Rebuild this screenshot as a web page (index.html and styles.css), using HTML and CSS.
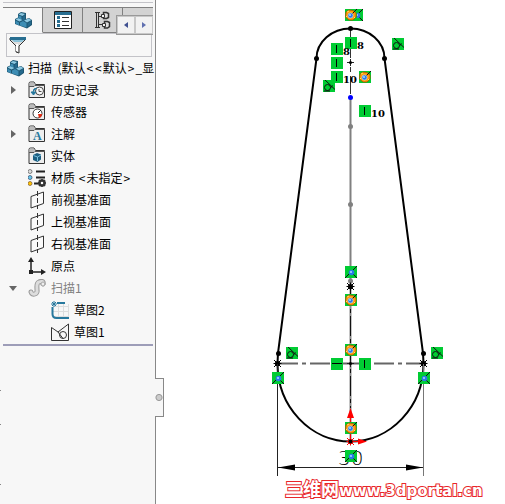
FILE: index.html
```
<!DOCTYPE html>
<html lang="zh-CN">

<head>
  <meta charset="UTF-8" />
  <title>扫描</title>
  <link rel="stylesheet" href="styles.css">
</head>

<body>
  <!-- shared symbols -->
  <svg class="defs" width="0" height="0" aria-hidden="true">
    <defs>
      <symbol id="part" viewBox="0 0 18 18">
        <path d="M1 8l3-1.500V3l3-2 5 1v6l3-1 3 2v5l-5 3.500L1 13z" fill="#1d5672" />
        <path d="M4.500 3.500L7 2l4 1-2.500 2zM1.500 8.500l3-1.500 4 2-3 1.500zM10 9.500l4.500-2 3 1.500-4.500 2.500z" fill="#8cc8e2" />
        <path d="M4.500 4.500l3 1v3l-3-1zM1.500 9.500l3.500 2v3l-3.500-2zM6 11.500l3-1.500 3.500 2v4.500L6 14.500z" fill="#3d8db4" />
        <path d="M8.500 6L11 4.200v4.500L8.500 10zM13.500 12.500l3.500-2.500v3.500L13.500 16z" fill="#25698d" />
      </symbol>
      <symbol id="folder" viewBox="0 0 18 18">
        <path d="M1 16.500V2.500Q1 1 2.500 1H6l1.500 2.500H16.500V16.500z" fill="#eee" stroke="#333" />
        <path d="M1.500 5V2Q2 1.500 3 1.500H6L7 4h9v1z" fill="#bbb" />
        <path d="M1 5.500h5l1-1h10" fill="none" stroke="#555" />
      </symbol>
      <symbol id="plane" viewBox="0 0 18 18">
        <path d="M3 5.500L15.500 1v11.500L3 17z" fill="#fafafa" stroke="#333" />
        <path d="M9.500 0v18" stroke="#333" stroke-dasharray="5 2" />
      </symbol>
      <symbol id="vertical" viewBox="0 0 12 12">
        <path d="M0 0h12v12H0z" fill="#00cc33" /><path d="M5.500 2v8" stroke="#000" />
      </symbol>
      <symbol id="horizontal" viewBox="0 0 12 12">
        <path d="M0 0h12v12H0z" fill="#00cc33" /><path d="M1 5.500h10" stroke="#000" />
      </symbol>
      <symbol id="tangent" viewBox="0 0 12 12">
        <path d="M0 0h12v12H0z" fill="#00cc33" />
        <path d="M2 0l10 9.500M1 11h6M7.500 8l2-2.500" stroke="#111" /><circle cx="4.500" cy="7.500" r="3" fill="none" stroke="#111" />
      </symbol>
      <symbol id="coincident" viewBox="0 0 12 12">
        <path d="M0 0h12v12H0z" fill="#00cc33" />
        <path d="M12 0L0 12M7 7l5 5" stroke="#111" />
        <circle cx="6.500" cy="6.500" r="2.800" fill="#2979e8" /><circle cx="6" cy="6" r="1" fill="#a9dcff" />
      </symbol>
      <symbol id="active" viewBox="0 0 12 12">
        <path d="M0 0h12v12H0z" fill="#00cc33" />
        <path d="M1 3l3-2 4 .500L11 4v4L8 11 4 11 .500 8z" fill="#ff9a0a" stroke="#a75200" stroke-width=".8" />
        <path d="M2 3l2-1M1 7l1 1M9 9l1-1" stroke="#ffe66b" />
        <path d="M6 6l6-6" stroke="#111" />
        <circle cx="5.500" cy="6.500" r="2.600" fill="#2979e8" stroke="#d9e6ee" stroke-width=".6" /><circle cx="5" cy="6" r="1" fill="#a9dcff" />
      </symbol>
      <symbol id="star" viewBox="-5 -5 10 10">
        <path d="M-4 0h8M0-4v8M-3.500-3.500l7 7M-3.500 3.500l7-7" stroke="currentColor" /><circle r="2.600" fill="currentColor" />
      </symbol>
    </defs>
  </svg>

  <div class="app">
    <aside class="panel">
      <div class="tabs">
        <button class="tab active" aria-label="设计树"><svg width="18" height="18"><use href="#part" /></svg></button>
        <button class="tab" aria-label="属性">
          <svg width="18" height="18" viewBox="0 0 18 18">
            <path d="M.5.500h17v17H.5z" fill="#fff" stroke="#222" /><path d="M1 1h16v3H1z" fill="#286e91" />
            <path d="M3 6.500h3M3 10.500h3M3 14.500h3" stroke="#286e91" stroke-width="3" />
            <path d="M8 6.500h7M8 10.500h7M8 14.500h7" stroke="#333" />
          </svg>
        </button>
        <button class="tab" aria-label="配置">
          <svg width="18" height="18" viewBox="0 0 18 18" fill="none" stroke="#333">
            <path d="M2.500 1v16M4.500 1v16M1 1.500h5M4.500 5.500h4M4.500 13.500h4M1 16.500h5" />
            <path d="M9.500 1.500h3l2 1v4l-2 1h-3zM10.500 10.500h3l2 1v4l-2 1.500h-3z" fill="#ddd" stroke-width="1.500" />
            <path d="M7.500 3.500h3v3h-3zM8.500 12.500h3v3h-3z" fill="#f4f4f4" />
          </svg>
        </button>
        <button class="tab last" aria-label="更多"></button>
        <div class="scroller">
          <button aria-label="向左"><svg width="4" height="6"><path d="M4 0v6L0 3z" fill="#405090" /></svg></button>
          <button aria-label="向右"><svg width="4" height="6"><path d="M0 0v6l4-3z" fill="#6070b0" /></svg></button>
        </div>
      </div>

      <label class="filter">
        <svg width="18" height="18" viewBox="0 0 18 18">
          <path d="M1 2v2l6 6v6l3 1v-7l6-6V2z" fill="#ddd" stroke="#333" /><path d="M1 1h16v3H1z" fill="#286e91" /><path d="M3 4h12l-2 2H5z" fill="#8bc3da" /><path d="M8 8v7" stroke="#fff" stroke-width="2" />
        </svg>
        <input type="text" aria-label="过滤">
      </label>

      <div class="row root">
        <svg width="18" height="18"><use href="#part" /></svg>
        <span>扫描&nbsp; (默认<i>&lt;</i><i>&lt;</i>默认<i>&gt;</i>_显</span>
      </div>

      <ul class="tree">
        <li class="row">
          <button class="toggle" aria-label="展开"><svg width="5" height="8"><path d="M0 0v8l5-4z" fill="#666" /></svg></button>
          <svg width="18" height="18"><use href="#folder" /><circle cx="11.500" cy="10" r="4" fill="#f8f8f8" stroke="#444" /><path d="M11 8v2.500h2.500" fill="none" stroke="#555" /><path d="M3 11h5l-2.500 3zM5 11q0-4 4-4" fill="#27789d" stroke="#27789d" /></svg>
          <span>历史记录</span>
        </li>
        <li class="row">
          <svg width="18" height="18"><use href="#folder" /><circle cx="9.500" cy="10.500" r="4.500" fill="#fff" stroke="#333" /><path d="M10 10l3-3" stroke="#222" /><path d="M10 11h4q0 3-3 4z" fill="#e22b12" /></svg>
          <span>传感器</span>
        </li>
        <li class="row">
          <button class="toggle" aria-label="展开"><svg width="5" height="8"><path d="M0 0v8l5-4z" fill="#666" /></svg></button>
          <svg width="18" height="18"><use href="#folder" /><text x="5" y="15" class="letter">A</text></svg>
          <span>注解</span>
        </li>
        <li class="row">
          <svg width="18" height="18"><use href="#folder" /><path d="M5 8l4-2 4 1.500v5L9.500 15 5 13z" fill="#1d5f82" /><path d="M5.500 8.500l4 1.500V14M9.500 10L13 8" fill="none" stroke="#7bc0dd" /></svg>
          <span>实体</span>
        </li>
        <li class="row">
          <svg width="18" height="18" viewBox="0 0 18 18">
            <path d="M8 2.500h9M8 8.500h9M6 14.500h6" stroke="#222" stroke-width="2" />
            <circle cx="2" cy="2.500" r="2" fill="#ddd" stroke="#555" stroke-width=".7" /><circle cx="2" cy="8.500" r="2" fill="#65c9ed" stroke="#346" stroke-width=".7" /><circle cx="2" cy="14.500" r="2" fill="#ffc400" stroke="#753" stroke-width=".7" />
            <circle cx="14" cy="14" r="2.500" fill="#fff" stroke="#333" stroke-width="2.500" /><path d="M14 10v2M14 16v2M10 14h2M16 14h2M11 11l1 1M17 11l-1 1M11 17l1-1M17 17l-1-1" stroke="#333" stroke-width="1.500" />
          </svg>
          <span>材质 <i>&lt;</i>未指定<i>&gt;</i></span>
        </li>
        <li class="row"><svg width="18" height="18"><use href="#plane" /></svg><span>前视基准面</span></li>
        <li class="row"><svg width="18" height="18"><use href="#plane" /></svg><span>上视基准面</span></li>
        <li class="row"><svg width="18" height="18"><use href="#plane" /></svg><span>右视基准面</span></li>
        <li class="row">
          <svg width="18" height="18" viewBox="0 0 18 18"><path d="M3 3v12h12" fill="none" stroke="#222" stroke-width="1.500" /><path d="M0 5l3-5 3 5zM13 12l5 3-5 3zM1 13h4v4H1z" fill="#222" /></svg>
          <span>原点</span>
        </li>
        <li class="row off">
          <button class="toggle" aria-label="折叠"><svg width="8" height="5"><path d="M0 0h8L4 5z" fill="#666" /></svg></button>
          <svg width="18" height="18" viewBox="0 0 18 18" fill="none" stroke-linecap="round"><path d="M3 13c1 4 7 2 6-2 0-4-1-7 2-8 2-1 5-1 4 2" stroke="#999" stroke-width="5" /><path d="M3 13c1 4 7 2 6-2 0-4-1-7 2-8 2-1 5-1 4 2" stroke="#ddd" stroke-width="3" /><circle cx="15" cy="5" r="2" fill="#eee" stroke="#aaa" /></svg>
          <span>扫描1</span>
        </li>
        <li class="row child">
          <svg width="18" height="18" viewBox="0 0 18 18" fill="none"><path d="M7.500 3v15M12.500 3v15M17.500 3v15M2 5.500h16M2 10.500h16M2 15.500h16" stroke="#ddd" /><path d="M6 2h8M1.500 6v7q0 4 4 4H18" stroke="#27789d" stroke-width="2" /><path d="M0 3h6M3 0v6M1 1l4 4M1 5l4-4" stroke="#27789d" /></svg>
          <span>草图2</span>
        </li>
        <li class="row child">
          <svg width="18" height="18" viewBox="0 0 18 18" fill="none" stroke="#333"><path d="M.5 4.500v13h17V1L7 9z" /><circle cx="12" cy="12" r="3.500" /><path d="M7 9l5 6.500" /></svg>
          <span>草图1</span>
        </li>
      </ul>
      <button class="handle" aria-label="隐藏面板"></button>
    </aside>

    <main class="canvas">
      <svg class="sketch" viewBox="156 0 349 504">
        <!-- centre lines -->
        <path d="M350.500 28v30M350.500 67v5M350.500 76v18" stroke="#333" />
        <path d="M350.500 97v189" stroke="#808080" stroke-width="2" />
        <path d="M350.500 286v155" stroke="#888" stroke-width="2" />
        <path d="M350.500 286v122" stroke="#111" stroke-dasharray="20 3 4 3" />
        <path d="M278 363.500h145" stroke="#666" stroke-width="2" stroke-dasharray="20 4 4 4" />

        <!-- profile -->
        <path d="M277.500 363.500L278 353 316.500 58.500A34 30 0 0 1 384.500 58.500L423 353 423.500 363.500A73 78 0 0 1 277.500 363.500z" fill="none" stroke="#000" stroke-width="2" />
        <g fill="#000">
          <circle cx="350.500" cy="28.500" r="2.500" /><circle cx="316.500" cy="58.500" r="2.500" /><circle cx="384.500" cy="58.500" r="2.500" />
          <circle cx="278.500" cy="353.500" r="2.500" /><circle cx="423.500" cy="353.500" r="2.500" />
        </g>
        <circle cx="350.500" cy="97.500" r="2.500" fill="#0000ff" />
        <g fill="#808080"><circle cx="350.500" cy="126.500" r="2.500" /><circle cx="350.500" cy="204.500" r="2.500" /><circle cx="350.500" cy="281" r="2.500" /></g>
        <path d="M347 62.500h7M350.500 59v7M347 363.500h7M350.500 360v7" stroke="#222" />
        <circle cx="350.500" cy="62.500" r="1.500" /><circle cx="350.500" cy="363.500" r="1.500" />
        <use href="#star" x="345.500" y="281.500" width="10" height="10" />
        <use href="#star" x="272.500" y="358.500" width="10" height="10" />
        <use href="#star" x="418.500" y="358.500" width="10" height="10" />

        <!-- dimension -->
        <path d="M277.500 364v112M278 467.500h145" stroke="#222" /><path d="M423.500 364v112" stroke="#777" />
        <path d="M278 467.500l17-3v6zM423 467.500l-17-3v6z" />
        <text x="338" y="465" class="dimension">30</text>

        <!-- origin -->
        <path d="M350.500 441V416M350.500 441.500h10" stroke="#f00" />
        <path d="M350.500 408l3.500 10h-7zM367 441.500l-9-3v6z" fill="#f00" />
        <use href="#star" x="345.500" y="436.500" width="10" height="10" class="red" />
        <circle cx="350.500" cy="441.500" r="2" />

        <!-- relations -->
        <use href="#coincident" x="351" y="9" width="12" height="12" />
        <use href="#active" x="345" y="9" width="12" height="12" />
        <use href="#vertical" x="345" y="37" width="12" height="12" />
        <use href="#vertical" x="331" y="43" width="12" height="12" />
        <use href="#vertical" x="331" y="57" width="12" height="12" />
        <use href="#vertical" x="331" y="71" width="12" height="12" />
        <use href="#vertical" x="359" y="105" width="12" height="12" />
        <use href="#active" x="359" y="71" width="12" height="12" />
        <use href="#tangent" x="392" y="38" width="12" height="12" />
        <use href="#tangent" x="323" y="80" width="12" height="12" />
        <use href="#coincident" x="345" y="266" width="12" height="12" />
        <use href="#active" x="345" y="294" width="12" height="12" />
        <use href="#active" x="345" y="344" width="12" height="12" />
        <use href="#horizontal" x="331" y="358" width="12" height="12" />
        <use href="#vertical" x="359" y="358" width="12" height="12" />
        <use href="#tangent" x="286" y="347" width="12" height="12" />
        <use href="#tangent" x="431" y="347" width="12" height="12" />
        <use href="#coincident" x="272" y="372" width="12" height="12" />
        <use href="#coincident" x="418" y="372" width="12" height="12" />
        <use href="#active" x="345" y="422" width="12" height="12" />
        <use href="#coincident" x="345" y="450" width="12" height="12" />
        <g class="count">
          <text x="357" y="49">8</text><text x="343" y="55">8</text>
          <text x="343" y="83">10</text><text x="371" y="117">10</text>
        </g>

        <text x="285" y="496" class="mark"><tspan class="mark-cn">三维网</tspan><tspan>www.3dportal.cn</tspan></text>
      </svg>
    </main>
  </div>
</body>

</html>
```
FILE: styles.css
```
body {
  margin: 0;
  background: #fff;
  font-family: "Noto Sans CJK SC", sans-serif;
  font-size: 12px;
  color: #000;
}

button,
input {
  margin: 0;
  padding: 0;
  border: 0;
  background: none;
  font: inherit;
}

.defs {
  position: absolute;
}

.app {
  display: flex;
  height: 100vh;
}

.panel {
  position: relative;
  flex: none;
  box-sizing: border-box;
  width: 156px;
  padding: 2px 2px 0 3px;
  border-right: 1px solid #888;
  background:
    linear-gradient(#888, #888) 0 390px / 1px 1px no-repeat,
    linear-gradient(#888, #888) 0 424px / 1px 1px no-repeat,
    linear-gradient(#888, #888) 0 484px / 1px 1px no-repeat,
    #f7f7f7;
}

.tabs {
  position: relative;
  display: flex;
  height: 25px;
  padding-top: 4px;
  border-top: 1px solid #c3c3c8;
}

.tab {
  display: flex;
  flex: 0 0 40px;
  box-sizing: border-box;
  align-items: center;
  justify-content: center;
  height: 26px;
  border-top: 1px solid #808080;
  border-right: 1px solid #808080;
  border-bottom: 1px solid #808080;
  background: #d3d3d3;
}

.tab.active {
  border-bottom-color: #f7f7f7;
  background: #f7f7f7;
}

.tab.last {
  flex: 1;
  border-right: 0;
}

.scroller {
  position: absolute;
  right: 0;
  bottom: -3px;
  display: flex;
  border: 1px solid #999;
  border-right: 0;
  background: #fff;
}

.scroller button {
  display: flex;
  align-items: center;
  justify-content: center;
  width: 18px;
  height: 18px;
  border: 1px solid #c8c8c8;
  background: #f2f2f2;
}

.filter {
  display: flex;
  align-items: center;
  box-sizing: border-box;
  height: 24px;
  margin: 1px 1px 0 3px;
  padding-left: 2px;
  border: 1px solid #c3c3c8;
}

.filter input {
  flex: 1;
  min-width: 0;
}

.row {
  display: flex;
  align-items: center;
  gap: 5px;
  height: 22px;
  padding-left: 25px;
  line-height: 22px;
  white-space: nowrap;
}

.row > svg {
  flex: none;
}

.row i {
  padding: 0 1px;
  font-style: normal;
}

.root {
  gap: 4px;
  padding-left: 3px;
}

.tree {
  margin: 0;
  padding: 0 0 1px;
  border-bottom: 2px solid #9d9db8;
  list-style: none;
}

.toggle {
  display: flex;
  align-items: center;
  justify-content: center;
  width: 10px;
  height: 22px;
  margin-left: -20px;
  margin-right: 5px;
}

.off {
  color: #808080;
}

.child {
  padding-left: 48px;
}

.handle {
  position: absolute;
  top: 75%;
  left: 155px;
  box-sizing: border-box;
  width: 9px;
  height: 39px;
  border: 1px solid #888;
  border-left: 0;
  background: radial-gradient(circle at 50% 50%, #ccc 2px, #999 3px, #f7f7f7 4px);
}

.canvas {
  flex: 1;
  min-width: 0;
}

.sketch {
  display: block;
  width: 100%;
  height: 100%;
}

.letter {
  fill: #27789d;
  font: bold 12px "Liberation Serif", serif;
}

.red {
  color: #f00;
}

.dimension {
  font: 200 20px "DejaVu Sans Light", "DejaVu Sans", sans-serif;
}

.count {
  font: bold 10px "DejaVu Serif", serif;
}

.mark {
  fill: #fff;
  stroke: #e8262a;
  stroke-width: 2px;
  paint-order: stroke;
  font: bold 15px "DejaVu Sans", sans-serif;
}

.mark-cn {
  font: bold 18px "Noto Sans CJK SC", sans-serif;
}
```
